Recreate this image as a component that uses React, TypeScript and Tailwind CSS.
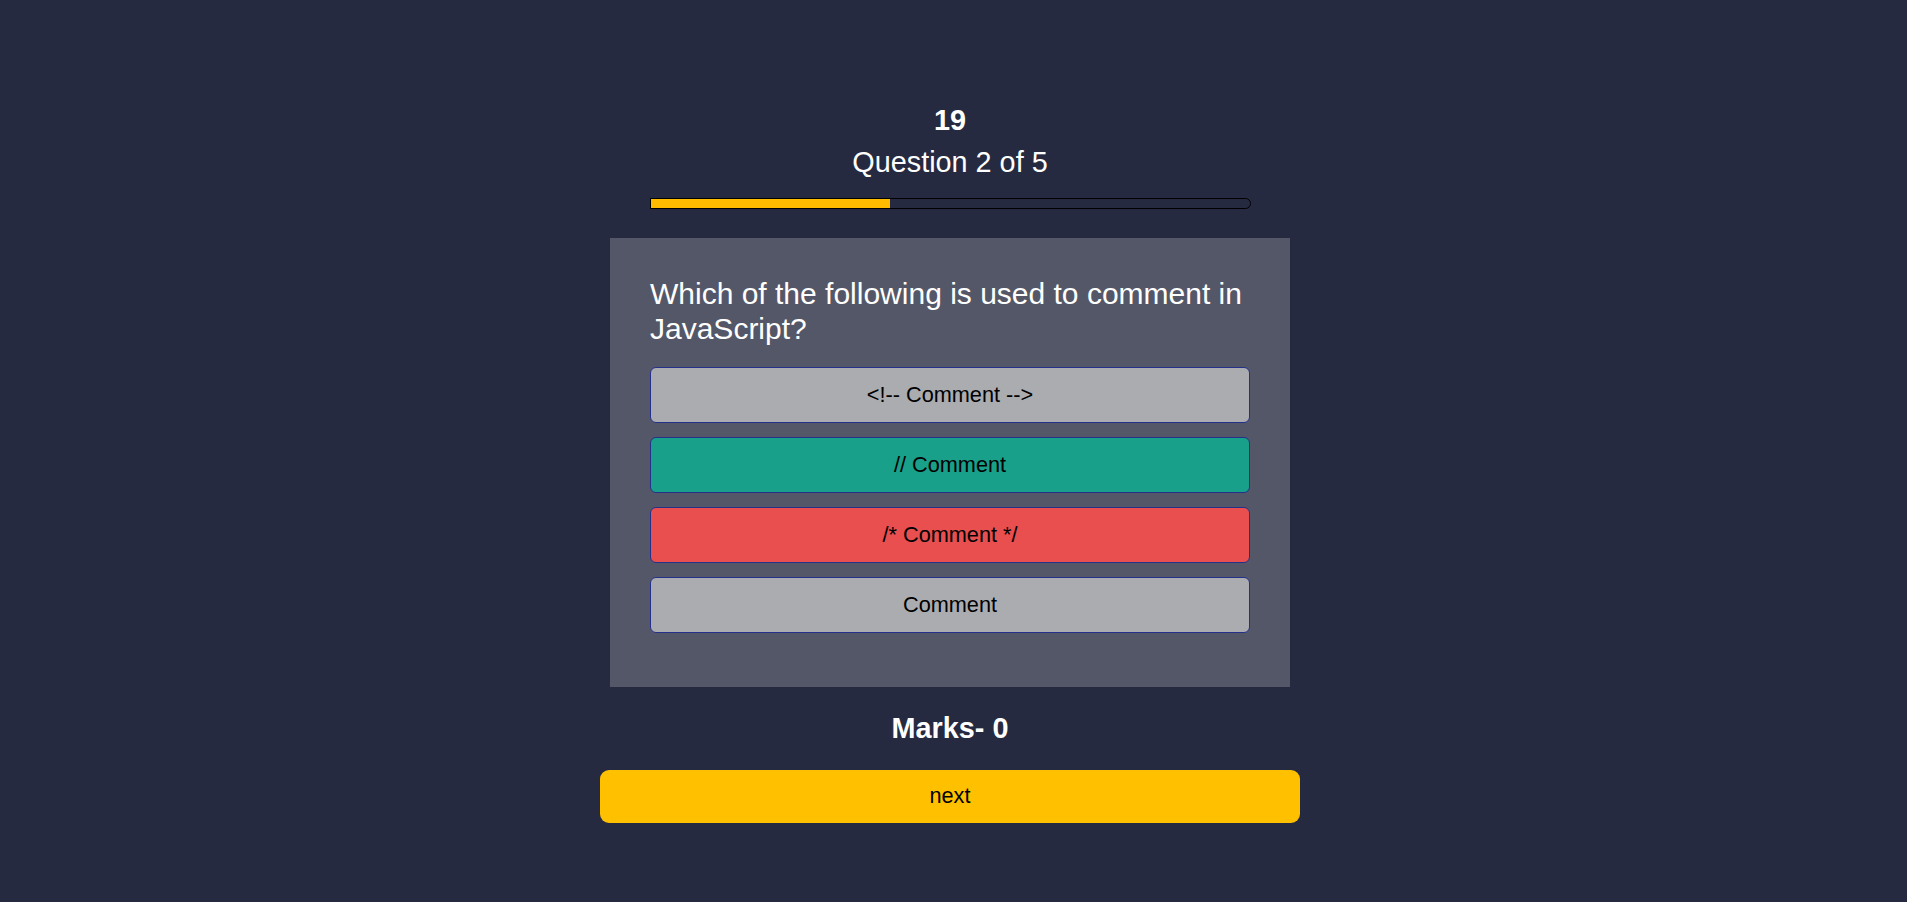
import React from 'react';

interface Option {
  id: number;
  text: string;
  state: 'idle' | 'correct' | 'wrong';
}

const options: Option[] = [
  { id: 1, text: '<!-- Comment -->', state: 'idle' },
  { id: 2, text: '// Comment', state: 'correct' },
  { id: 3, text: '/* Comment */', state: 'wrong' },
  { id: 4, text: 'Comment', state: 'idle' },
];

const optionBg = {
  idle: 'bg-[#abacb0]',
  correct: 'bg-[#18a08a]',
  wrong: 'bg-[#e94f4f]',
};

const App: React.FC = () => {
  const current = 2;
  const total = 5;
  const progress = (current / total) * 100;

  return (
    <div
      className="min-h-[902px] w-full bg-[#252a41] text-white pr-[7px]"
      style={{ fontFamily: '"Liberation Sans", Arial, sans-serif' }}
    >
      <div className="flex flex-col items-center pt-[104px]">
        <h2 className="text-[28.8px] leading-[33px] font-bold">19</h2>
        <p className="mt-[9px] text-[28.8px] leading-[33px]">
          Question {current} of {total}
        </p>

        {/* progress */}
        <div className="mt-[19px] w-[601px] h-[11px] border border-black rounded-r-full overflow-hidden">
          <div className="h-full bg-[#ffbb00]" style={{ width: `${progress}%` }} />
        </div>

        {/* question card */}
        <div className="mt-[29px] w-[680px] bg-[#545768] px-10 pt-[39px] pb-10">
          <h3 className="text-[30px] leading-[34.5px] mb-[21px]">
            Which of the following is used to comment in JavaScript?
          </h3>
          <div className="flex flex-col">
            {options.map((o) => (
              <button
                key={o.id}
                className={`w-full h-[56px] mb-[14px] rounded-[6px] border border-[#25308a] text-black text-[21.7px] ${optionBg[o.state]}`}
              >
                {o.text}
              </button>
            ))}
          </div>
        </div>

        <p className="mt-[25px] text-[28.8px] leading-[33px] font-bold">Marks- 0</p>

        <button className="mt-[25px] w-[700px] h-[53px] rounded-[9px] bg-[#ffc000] text-black text-[21.7px]">
          next
        </button>
      </div>
    </div>
  );
};

export default App;
